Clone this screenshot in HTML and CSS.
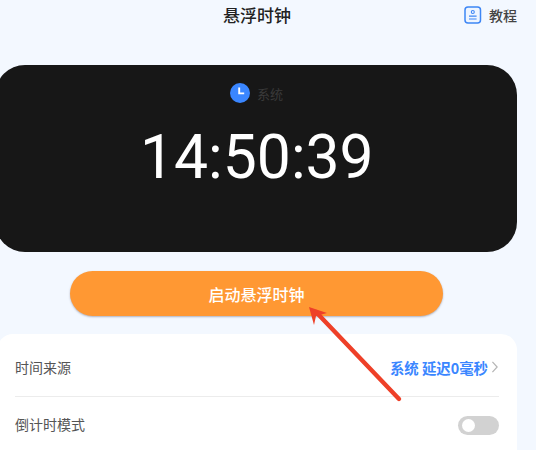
FILE: index.html
```html
<!DOCTYPE html>
<html lang="zh">
<head>
<meta charset="utf-8">
<title>悬浮时钟</title>
<link rel="stylesheet" href="styles.css">
</head>
<body>
<div class="page">
  <header class="top">
    <h1 class="title">悬浮时钟</h1>
    <div class="guide">
      <svg class="guide-icon" viewBox="0 0 18 18" width="18" height="18" aria-hidden="true">
        <rect x="1" y="1" width="15.5" height="16" rx="3" fill="#eef5ff" stroke="#3d86f5" stroke-width="1.5"/>
        <circle cx="8.8" cy="6" r="1.5" fill="none" stroke="#3d86f5" stroke-width="1.1"/>
        <path d="M5 10.2h7.6M5 13h7.6" stroke="#3d86f5" stroke-width="1.2"/>
      </svg>
      <span>教程</span>
    </div>
  </header>
  <section class="clock">
    <div class="source">
      <svg viewBox="0 0 20 20" width="20" height="20" aria-hidden="true">
        <circle cx="10" cy="10" r="10" fill="#3a86ff"/>
        <path d="M9.2 4.5v5.9h5" fill="none" stroke="#fff" stroke-width="1.9"/>
      </svg>
      <span>系统</span>
    </div>
    <div class="time">14:50:39</div>
  </section>
  <button class="start">启动悬浮时钟</button>
  <section class="panel">
    <div class="row row-line">
      <span class="label">时间来源</span>
      <span class="value">系统 延迟0毫秒<svg class="chev" viewBox="0 0 8 14" width="8" height="12" aria-hidden="true"><path d="M1 1l5.5 6L1 13" fill="none" stroke="#b5b5b5" stroke-width="1.4"/></svg></span>
    </div>
    <div class="row">
      <span class="label">倒计时模式</span>
      <span class="switch"><span class="knob"></span></span>
    </div>
  </section>
  <svg class="arrow" viewBox="0 0 536 450" width="536" height="450" aria-hidden="true">
    <path d="M399 399L316 312" stroke="#ee4028" stroke-width="4.4" stroke-linecap="round" fill="none"/>
    <path d="M309 307L327 313L316 316L314 325Z" fill="#ee4028"/>
  </svg>
</div>
</body>
</html>
```
FILE: styles.css
```css
html, body {
  margin: 0;
  padding: 0;
  height: 100%;
  overflow: hidden;
}
body {
  background: #f3f8ff;
  font-family: "Noto Sans CJK SC", "Noto Sans", sans-serif;
}
.page {
  position: relative;
  width: 536px;
  height: 450px;
  overflow: hidden;
}
.top {
  position: relative;
  height: 65px;
  display: flex;
  justify-content: flex-start;
}
.title {
  margin: 3px 0 0 223px;
  font-size: 17px;
  line-height: 24px;
  font-weight: 500;
  color: #222;
}
.guide {
  position: absolute;
  top: 3px;
  left: 464px;
  display: flex;
  align-items: center;
  gap: 7px;
  height: 24px;
  font-size: 14px;
  font-weight: 500;
  color: #444;
}
.guide-icon { display: block; }
.clock {
  margin-left: -5px;
  width: 522px;
  height: 187px;
  box-sizing: border-box;
  padding: 18px 0 0 235px;
  background: #171717;
  border-radius: 30px;
}
.source {
  display: flex;
  align-items: center;
  gap: 7px;
  height: 20px;
  font-size: 13px;
  color: #3a3a3a;
}
.source svg { display: block; }
.time {
  margin: 17px 0 0 -90px;
  font-family: Roboto, sans-serif;
  font-size: 60.6px;
  line-height: 76px;
  font-weight: 400;
  white-space: nowrap;
  color: #fff;
}
.start {
  display: block;
  margin: 19px 0 0 70px;
  width: 373px;
  height: 45px;
  padding: 0;
  border: 0;
  border-radius: 23px;
  background: #ff9833;
  box-shadow: 0 1px 2px rgba(90, 90, 110, .45);
  color: #fff;
  font-family: inherit;
  font-size: 16px;
  font-weight: 500;
}
.panel {
  margin-top: 18px;
  margin-left: -3px;
  width: 520px;
  height: 130px;
  box-sizing: border-box;
  padding: 0 18px;
  background: #fff;
  border-radius: 16px;
}
.row {
  height: 62px;
  display: flex;
  align-items: center;
  justify-content: space-between;
  font-size: 14px;
}
.row-line {
  height: 58px;
  padding-top: 4px;
  border-bottom: 1px solid #ececec;
}
.row + .row { height: 57px; }
.row + .row .label { margin-bottom: 4px; }
.label { color: #555; }
.value {
  display: flex;
  align-items: center;
  gap: 3px;
  color: #3a86ff;
  font-weight: 700;
  font-size: 14.4px;
}
.chev { display: block; }
.switch {
  display: flex;
  align-items: center;
  width: 41px;
  height: 19px;
  box-sizing: border-box;
  padding-left: 4px;
  background: #d2d2d2;
  border-radius: 10px;
}
.knob {
  width: 13px;
  height: 13px;
  background: #fff;
  border-radius: 50%;
}
.arrow {
  position: absolute;
  left: 0;
  top: 0;
  pointer-events: none;
}
```
